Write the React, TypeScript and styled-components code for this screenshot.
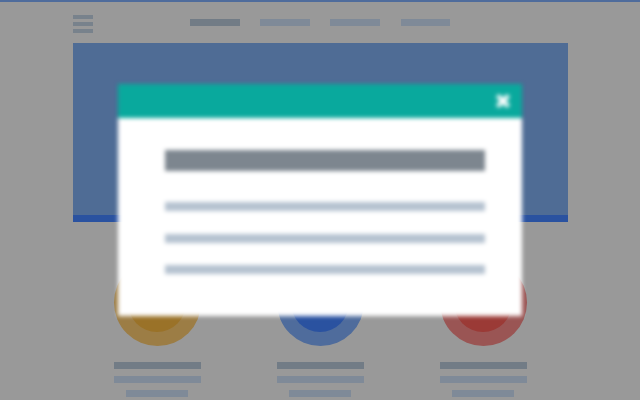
import React from "react";
import styled, { createGlobalStyle } from "styled-components";

const Global = createGlobalStyle`
  html, body { margin: 0; padding: 0; background: #999999; height: 100%; overflow: hidden; }
  #root { height: 100%; }
`;

const Page = styled.div`
  width: 640px;
  height: 400px;
  box-sizing: border-box;
  border-top: 2px solid #4f6c9c;
  overflow: hidden;
`;

const Container = styled.div`
  width: 495px;
  margin: 0 auto;
`;

const Nav = styled.nav`
  height: 41px;
  display: flex;
  align-items: center;
  gap: 97.5px;
`;

const Burger = styled.div`
  width: 20px;
  display: flex;
  flex-direction: column;
  gap: 3px;
  margin-top: 3px;
`;

const BurgerBar = styled.span`
  height: 4px;
  background: #78828c;
`;

const NavLinks = styled.div`
  display: flex;
  gap: 20.7px;
`;

const NavLink = styled.span<{ $active?: boolean }>`
  width: 49.5px;
  height: 7px;
  background: ${(p) => (p.$active ? "#727c86" : "#7f8a98")};
`;

const Hero = styled.div`
  height: 179px;
  box-sizing: border-box;
  background: #4f6c95;
  border-bottom: 7px solid #2a52a0;
`;

const Features = styled.div`
  display: flex;
  justify-content: center;
  gap: 76px;
  margin-top: 37px;
`;

const Feature = styled.div`
  width: 87px;
  display: flex;
  flex-direction: column;
  align-items: center;
  gap: 7px;
`;

const Ring = styled.div<{ $outer: string; $inner: string }>`
  width: 87px;
  height: 87px;
  border-radius: 50%;
  background: ${(p) => p.$outer};
  display: flex;
  align-items: center;
  justify-content: center;
  margin-bottom: 9px;
  &::after {
    content: "";
    width: 58px;
    height: 58px;
    border-radius: 50%;
    background: ${(p) => p.$inner};
  }
`;

const TextBar = styled.div<{ $dark?: boolean; $short?: boolean }>`
  width: ${(p) => (p.$short ? "62px" : "87px")};
  height: 7px;
  background: ${(p) => (p.$dark ? "#727c86" : "#7f8a98")};
`;

const Overlay = styled.div`
  position: fixed;
  left: 118px;
  top: 84px;
`;

const Modal = styled.div`
  width: 404px;
  height: 232px;
  background: #ffffff;
  filter: blur(2px);
`;

const ModalHeader = styled.div`
  height: 34px;
  background: #09a99d;
  display: flex;
  align-items: center;
  justify-content: flex-end;
  padding-right: 11px;
`;

const CloseIcon = styled.svg`
  width: 16px;
  height: 16px;
  filter: blur(0.6px);
`;

const ModalBody = styled.div`
  padding: 32px 37px 0 47px;
  display: flex;
  flex-direction: column;
`;

const ModalTitle = styled.div`
  height: 21px;
  background: #7d868f;
  margin-bottom: 31px;
`;

const ModalLine = styled.div`
  height: 9px;
  background: #b5c2d0;
  margin-bottom: 22.5px;
`;

const features = [
  { outer: "#9c7d45", inner: "#9a7228" },
  { outer: "#4f6c9c", inner: "#2a52a0" },
  { outer: "#9a5554", inner: "#9b3a36" },
];

export default function App() {
  return (
    <>
      <Global />
      <Page>
        <Container>
          <Nav>
            <Burger>
              <BurgerBar />
              <BurgerBar />
              <BurgerBar />
            </Burger>
            <NavLinks>
              <NavLink $active />
              <NavLink />
              <NavLink />
              <NavLink />
            </NavLinks>
          </Nav>
          <Hero />
          <Features>
            {features.map((f) => (
              <Feature key={f.inner}>
                <Ring $outer={f.outer} $inner={f.inner} />
                <TextBar $dark />
                <TextBar />
                <TextBar $short />
              </Feature>
            ))}
          </Features>
        </Container>
      </Page>
      <Overlay>
        <Modal>
          <ModalHeader>
            <CloseIcon viewBox="0 0 16 16" aria-hidden="true">
              <path d="M2.5 2.5 L13.5 13.5 M13.5 2.5 L2.5 13.5" stroke="#ffffff" strokeWidth="4.5" />
            </CloseIcon>
          </ModalHeader>
          <ModalBody>
            <ModalTitle />
            <ModalLine />
            <ModalLine />
            <ModalLine />
          </ModalBody>
        </Modal>
      </Overlay>
    </>
  );
}
